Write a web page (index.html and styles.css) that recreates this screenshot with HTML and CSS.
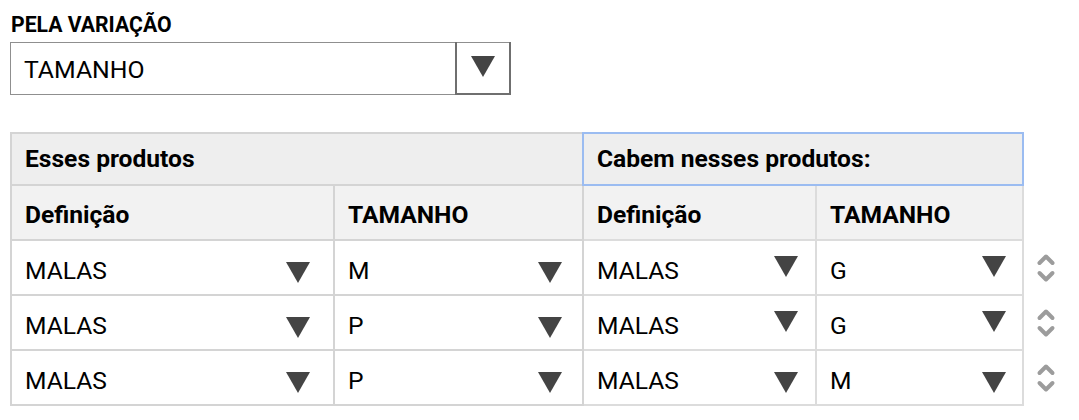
FILE: index.html
```html
<!DOCTYPE html>
<html lang="pt">
<head>
<meta charset="utf-8">
<link rel="stylesheet" href="styles.css">
</head>
<body>
<div class="page">
  <div class="field">
    <label class="field-label">PELA VARIAÇÃO</label>
    <div class="select">
      <span class="select-value">TAMANHO</span>
      <span class="select-btn"><span class="tri"></span></span>
    </div>
  </div>

  <table class="map">
    <colgroup>
      <col class="c1"><col class="c2"><col class="c3"><col class="c4"><col class="c5">
    </colgroup>
    <tr class="r-h1">
      <th colspan="2" class="lft">Esses produtos</th>
      <th colspan="2" class="rgt focus">Cabem nesses produtos:</th>
      <td class="blank"></td>
    </tr>
    <tr class="r-h2">
      <th class="lft">Definição</th>
      <th class="lft">TAMANHO</th>
      <th class="rgt">Definição</th>
      <th class="rgt">TAMANHO</th>
      <td class="blank"></td>
    </tr>
    <tr class="r-d">
      <td class="lft k1"><div class="dd"><span>MALAS</span><span class="tri"></span></div></td>
      <td class="lft k2"><div class="dd"><span>M</span><span class="tri"></span></div></td>
      <td class="rgt k3"><div class="dd hi"><span>MALAS</span><span class="tri"></span></div></td>
      <td class="rgt k4"><div class="dd hi"><span>G</span><span class="tri"></span></div></td>
      <td class="sort"><svg viewBox="0 0 20 32" width="20" height="32"><path d="M3.5 11 L10 4.5 L16.5 11"/><path d="M3.5 21 L10 27.5 L16.5 21"/></svg></td>
    </tr>
    <tr class="r-d">
      <td class="lft k1"><div class="dd"><span>MALAS</span><span class="tri"></span></div></td>
      <td class="lft k2"><div class="dd"><span>P</span><span class="tri"></span></div></td>
      <td class="rgt k3"><div class="dd hi"><span>MALAS</span><span class="tri"></span></div></td>
      <td class="rgt k4"><div class="dd hi"><span>G</span><span class="tri"></span></div></td>
      <td class="sort"><svg viewBox="0 0 20 32" width="20" height="32"><path d="M3.5 11 L10 4.5 L16.5 11"/><path d="M3.5 21 L10 27.5 L16.5 21"/></svg></td>
    </tr>
    <tr class="r-d">
      <td class="lft k1"><div class="dd"><span>MALAS</span><span class="tri"></span></div></td>
      <td class="lft k2"><div class="dd"><span>P</span><span class="tri"></span></div></td>
      <td class="rgt k3"><div class="dd"><span>MALAS</span><span class="tri"></span></div></td>
      <td class="rgt k4"><div class="dd"><span>M</span><span class="tri"></span></div></td>
      <td class="sort"><svg viewBox="0 0 20 32" width="20" height="32"><path d="M3.5 11 L10 4.5 L16.5 11"/><path d="M3.5 21 L10 27.5 L16.5 21"/></svg></td>
    </tr>
  </table>
</div>
</body>
</html>
```
FILE: styles.css
```css
* { box-sizing: border-box; }
html, body { margin: 0; padding: 0; background: #fff; }
body { font-family: Roboto, "Liberation Sans", sans-serif; color: #000; }
.page { padding: 12px 0 0 10px; }

.field-label { display: block; font-weight: 700; font-size: 21.2px; line-height: 25px; margin: 0 0 5px 1px; }
.select {
  display: flex; width: 501px; height: 53px;
  border: 1px solid #8f8f8f; align-items: stretch;
}
.select-value { flex: 1; display: flex; align-items: center; padding-left: 13px; font-size: 24.8px; padding-top: 1px; }
.select-btn {
  width: 56px; display: flex; align-items: center; justify-content: center;
  border-left: 2px solid #6f6f6f; border-right: 2px solid #6f6f6f; border-bottom: 2px solid #6f6f6f;
  margin: -1px -1px -1px 0; padding-bottom: 2px;
}
.tri {
  display: block; width: 0; height: 0;
  border-left: 12px solid transparent; border-right: 12px solid transparent;
  border-top: 21px solid #444;
}

.map {
  margin-top: 37px;
  border-collapse: collapse;
  table-layout: fixed;
  width: 1069px;
}
.c1 { width: 323px; }
.c2 { width: 249px; }
.c3 { width: 233px; }
.c4 { width: 207px; }
.c5 { width: 57px; }

.map th, .map td { padding: 0 13px; font-size: 24.6px; text-align: left; vertical-align: middle; }
.map th { font-weight: 700; }
.lft { border: 2px solid #d4d4d4; }
.rgt { border: 2px solid #dcdcdc; }
.r-h1 { height: 52px; }
.r-h1 th { background: #eeeeee; padding-bottom: 2px; }
.focus { outline: 2px solid #9bbcf1; outline-offset: -1px; }
.r-h2 { height: 55px; }
.r-h2 th { background: #f2f2f2; padding-top: 3px; }
.r-d { height: 55px; }
.r-d:first-of-type { height: 56px; }
.r-d td { background: #fff; padding-top: 5px; }
.blank { border: none; background: #fff; }

.dd { display: flex; align-items: center; justify-content: space-between; }
.dd .tri { margin-top: 5px; }
.dd.hi .tri { margin-top: -7px; }
.k1 { padding-right: 23px !important; }
.k2 { padding-right: 20px !important; }
.k3 { padding-right: 17px !important; }
.k4 { padding-right: 16px !important; }

.sort { border: none; padding: 0 0 0 12px !important; }
.sort svg { display: block; }
.sort svg path { fill: none; stroke: #9c9c9c; stroke-width: 4; stroke-linecap: round; stroke-linejoin: round; }
```
